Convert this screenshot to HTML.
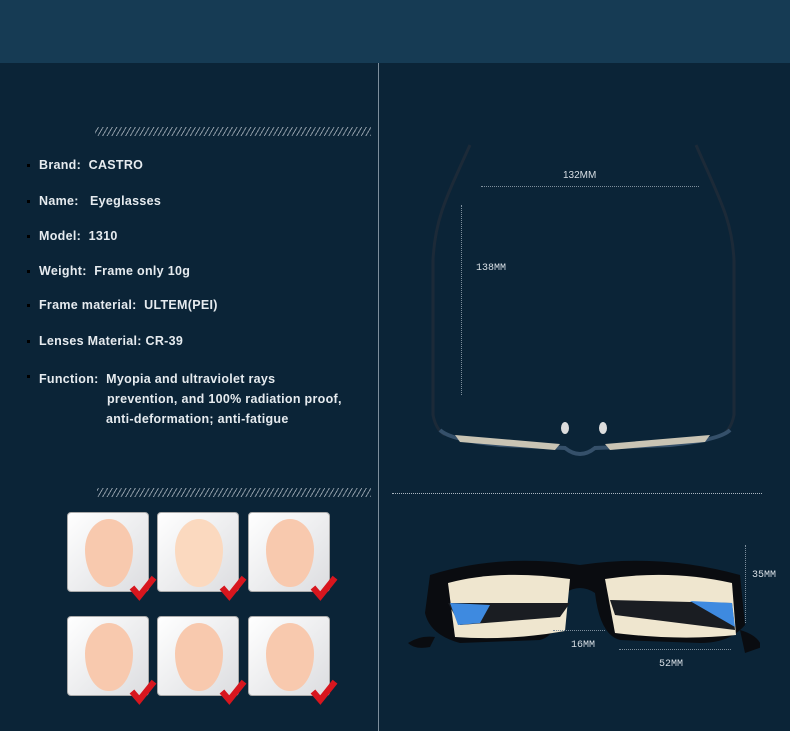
<!DOCTYPE html>
<html><head><style>
body{margin:0;width:790px;height:731px;background:#0b2437;overflow:hidden;position:relative;font-family:"Liberation Sans",sans-serif;}
.top{position:absolute;left:0;top:0;width:790px;height:63px;background:#163b54;}
.vl{position:absolute;left:378px;top:63px;width:1px;height:668px;background:#7d8e9c;}
.hatch{position:absolute;height:9px;background:repeating-linear-gradient(-60deg,#8896a2 0 1px,transparent 1px 4px);}
.it{position:absolute;left:39px;color:#e6ebef;font-size:12.5px;font-weight:bold;letter-spacing:.3px;}
.it:before{content:"";position:absolute;left:-12px;top:6px;width:3px;height:3px;background:#000;}
.tile{position:absolute;width:80px;height:78px;border-radius:4px;background:linear-gradient(135deg,#fff,#dcdde0);border:1px solid #aaa;}
.face{position:absolute;left:17px;top:6px;width:48px;height:68px;border-radius:50% 50% 48% 48%/45% 45% 55% 55%;background:#f8c9ae;}
.chk{position:absolute;right:-9px;bottom:-10px;width:28px;height:27px;}
.dim{position:absolute;color:#d8dfe5;font-size:10px;font-family:"Liberation Mono",monospace;}
.dh{position:absolute;border-top:1px dotted #7d8e9c;}
.dv{position:absolute;border-left:1px dotted #7d8e9c;}
</style></head><body>
<div class="top"></div>
<div class="vl"></div>
<div class="hatch" style="left:95px;top:127px;width:276px"></div>
<div class="hatch" style="left:97px;top:488px;width:274px"></div>
<div class="it" style="top:158px">Brand:&nbsp; CASTRO</div>
<div class="it" style="top:194px">Name:&nbsp;&nbsp; Eyeglasses</div>
<div class="it" style="top:229px">Model:&nbsp; 1310</div>
<div class="it" style="top:264px">Weight:&nbsp; Frame only 10g</div>
<div class="it" style="top:298px">Frame material:&nbsp; ULTEM(PEI)</div>
<div class="it" style="top:334px">Lenses Material: CR-39</div>
<div class="it" style="top:369px;line-height:20px">Function:&nbsp; Myopia and ultraviolet rays<br><span style="padding-left:68px">prevention, and 100% radiation proof,</span><br><span style="padding-left:67px">anti-deformation; anti-fatigue</span></div>

<div class="tile" style="left:67px;top:512px"><div class="face"></div><svg class="chk" viewBox="0 0 22 22"><path d="M2 11l6 7L20 3" stroke="#d8161e" stroke-width="5" fill="none"/></svg></div>
<div class="tile" style="left:157px;top:512px"><div class="face" style="background:#fbd9bf"></div><svg class="chk" viewBox="0 0 22 22"><path d="M2 11l6 7L20 3" stroke="#d8161e" stroke-width="5" fill="none"/></svg></div>
<div class="tile" style="left:248px;top:512px"><div class="face"></div><svg class="chk" viewBox="0 0 22 22"><path d="M2 11l6 7L20 3" stroke="#d8161e" stroke-width="5" fill="none"/></svg></div>
<div class="tile" style="left:67px;top:616px"><div class="face"></div><svg class="chk" viewBox="0 0 22 22"><path d="M2 11l6 7L20 3" stroke="#d8161e" stroke-width="5" fill="none"/></svg></div>
<div class="tile" style="left:157px;top:616px"><div class="face"></div><svg class="chk" viewBox="0 0 22 22"><path d="M2 11l6 7L20 3" stroke="#d8161e" stroke-width="5" fill="none"/></svg></div>
<div class="tile" style="left:248px;top:616px"><div class="face"></div><svg class="chk" viewBox="0 0 22 22"><path d="M2 11l6 7L20 3" stroke="#d8161e" stroke-width="5" fill="none"/></svg></div>

<svg style="position:absolute;left:400px;top:130px" width="390" height="340">
<path d="M70 15 C45 70 35 90 33 130 L33 285 Q36 300 45 305" stroke="#1c2a38" stroke-width="3" fill="none"/>
<path d="M296 15 C320 70 332 90 334 130 L334 285 Q331 300 322 305" stroke="#1c2a38" stroke-width="3" fill="none"/>
<path d="M40 300 Q50 310 100 315 L165 318 Q180 330 195 318 L270 315 Q320 310 330 300" stroke="#35506a" stroke-width="4" fill="none"/>
<path d="M55 305 L160 314 L155 320 L60 312Z" fill="#c9c4b4"/>
<path d="M205 314 L310 305 L305 312 L210 320Z" fill="#c9c4b4"/>
<ellipse cx="165" cy="298" rx="4" ry="6" fill="#ddd"/><ellipse cx="203" cy="298" rx="4" ry="6" fill="#ddd"/>
</svg>
<div class="dh" style="left:481px;top:186px;width:218px"></div>
<div class="dv" style="left:461px;top:205px;height:190px"></div>
<div class="dim" style="left:563px;top:170px;font-family:'Liberation Sans';">132MM</div>
<div class="dim" style="left:476px;top:263px">138MM</div>

<div class="dh" style="left:392px;top:493px;width:370px;border-color:#aab6c0"></div>
<svg style="position:absolute;left:400px;top:553px" width="360" height="110">
<path d="M30 22 Q100 0 180 12 Q260 0 340 22 L345 72 Q330 90 300 90 L220 87 Q200 82 195 40 Q180 30 165 40 Q160 82 140 87 L60 90 Q30 82 25 60Z" fill="#0a0c10"/>
<path d="M8 90 Q20 82 35 84 L30 94 Q15 97 8 90Z" fill="#0a0c10"/>
<path d="M340 77 Q358 82 362 94 L345 100Z" fill="#0a0c10"/>
<path d="M48 30 Q100 16 170 26 L165 78 Q110 88 55 84Z" fill="#efe6cf"/>
<path d="M205 26 Q270 16 332 30 L336 82 Q280 88 215 80Z" fill="#efe6cf"/>
<path d="M48 50 L170 50 L160 64 L60 72Z" fill="#1a1d22"/>
<path d="M50 50 L90 52 L80 70 L58 72Z" fill="#3e8ae0"/>
<path d="M210 47 L332 50 L335 77 L215 62Z" fill="#1a1d22"/>
<path d="M290 48 L332 50 L335 74Z" fill="#3e8ae0"/>
</svg>
<div class="dv" style="left:745px;top:545px;height:78px"></div>
<div class="dh" style="left:553px;top:630px;width:52px"></div>
<div class="dh" style="left:619px;top:649px;width:112px"></div>
<div class="dim" style="left:752px;top:570px">35MM</div>
<div class="dim" style="left:571px;top:640px">16MM</div>
<div class="dim" style="left:659px;top:659px">52MM</div>
</body></html>
